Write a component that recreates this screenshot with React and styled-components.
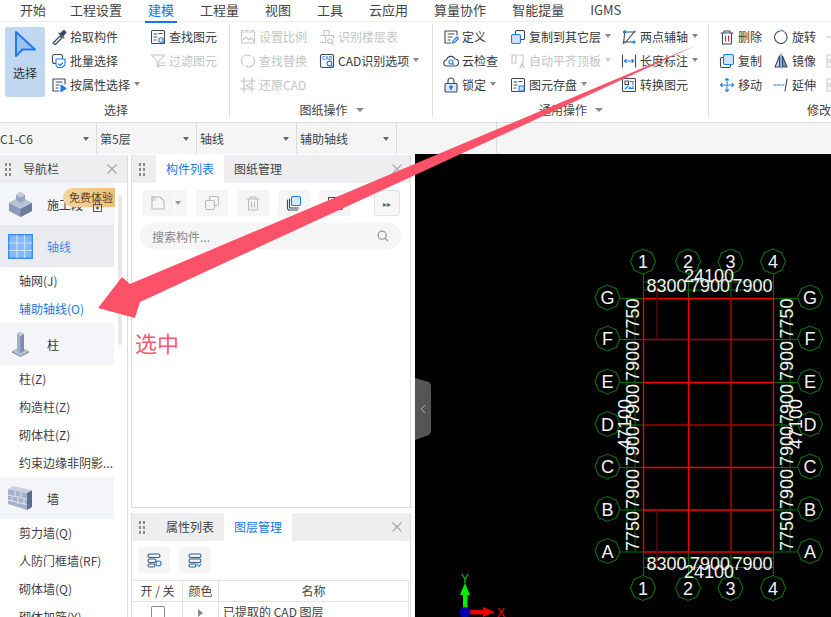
import React from 'react';
import styled, { createGlobalStyle } from 'styled-components';

const Global = createGlobalStyle`
  html, body { margin: 0; padding: 0; background: #fff; }
  * { box-sizing: border-box; }
  body { font-family: "Noto Sans CJK SC", "Noto Sans", sans-serif; font-size: 12px; color: #333; }
`;

const Page = styled.div`
  position: relative; width: 831px; height: 617px; overflow: hidden; display: flex; flex-direction: column; background: #fff;
`;
const Menu = styled.div`
  height: 22px; flex: none; display: flex; gap: 26px; padding-left: 20px; border-bottom: 1px solid #efefef; background: #fff;
  & > :first-child { margin-right: -2px; }
`;
const MenuItem = styled.div`
  position: relative; font-size: 13px; line-height: 20px; white-space: nowrap;
  color: ${p => (p.$active ? '#1677e8' : '#444')};
  ${p => p.$active && `&::after { content: ''; position: absolute; left: -3px; right: -3px; bottom: -2px; height: 2px; background: #1677e8; }`}
`;
const Ribbon = styled.div`
  height: 100px; flex: none; display: flex; overflow: hidden; background: #fff;
`;
const Group = styled.div`
  flex: none; width: ${p => p.$w}px; display: flex; flex-direction: column; padding-top: 2px;
  ${p => p.$sep && `position: relative; &::after { content: ''; position: absolute; right: 0; top: 2px; height: 94px; width: 1px; background: #e2e2e2; }`}
`;
const GroupBody = styled.div`
  display: flex; height: 76px; padding-left: ${p => p.$pad}px;
`;
const GroupTitle = styled.div`
  height: 20px; line-height: 20px; display: flex; align-items: center; justify-content: center; gap: 7px; color: #444; padding-left: ${p => p.$off || 0}px; white-space: nowrap;
`;
const SelectBtn = styled.div`
  width: 40px; height: 70px; margin: 3px 6px 0 0; border-radius: 3px; background: #bfd7f0; display: flex; flex-direction: column; align-items: center; padding-top: 3px; gap: 6px;
`;
const Col = styled.div`
  flex: none; width: ${p => p.$w}px; display: flex; flex-direction: column;
`;
const Item = styled.div`
  height: 24px; display: flex; align-items: center; gap: 3px; white-space: nowrap; color: ${p => (p.$off ? '#c4c4c4' : '#3a3a3a')};
  svg { flex: none; margin-top: 1px; }
`;
const Caret = styled.span`
  display: inline-block; margin-left: 1px; width: 0; height: 0; border-left: 3px solid transparent; border-right: 3px solid transparent;
  border-top: 4px solid ${p => p.$c || '#888'};
`;
const TitleCaret = styled(Caret)`
  border-left-width: 4px; border-right-width: 4px; border-top-width: 4px;
`;
const Bar = styled.div`
  height: 32px; flex: none; display: flex; background: #f5f5f5; border-top: 1px solid #dcdcdc;
`;
const BarCell = styled.div`
  width: ${p => p.$w}px; flex: none; border-right: 1px solid #dcdcdc; display: flex; align-items: center; justify-content: space-between; padding: 0 7px 0 ${p => p.$pad}px; color: #444;
`;
const Body = styled.div`
  flex: 1; min-height: 0; display: flex;
`;
const Nav = styled.div`
  position: relative; width: 128px; flex: none; margin-top: 1px; border-right: 1px solid #ddd; overflow: hidden;
`;
const PanelHead = styled.div`
  height: 28px; display: flex; align-items: stretch; background: #eeeef0; position: relative; color: #444;
`;
const Grip = styled.div`
  width: 7px; height: 14px; margin: 7px 0 0 ${p => p.$l}px; flex: none;
  background-image: radial-gradient(circle, #8a8a8a 1.2px, transparent 1.4px);
  background-size: 4px 5px;
`;
const NavTitle = styled.div`
  margin-left: 12px; line-height: 28px;
`;
const CloseMark = styled.div`
  position: absolute; right: ${p => p.$r}px; top: 7px; width: 14px; height: 14px; color: #aaa;
  svg { display: block; }
`;
const Cat = styled.div`
  width: 114px; height: 42px; display: flex; align-items: center; padding-left: 8px; gap: 14px; background: ${p => (p.$active ? '#e9ebf0' : '#f4f5f8')}; color: ${p => (p.$active ? '#4a86e8' : '#3a3a3a')};
`;
const Sub = styled.div`
  height: 28px; line-height: 28px; padding-left: 19px; white-space: nowrap; width: 114px; color: ${p => (p.$active ? '#1677e8' : '#3f3f3f')};
`;
const Badge = styled.div`
  position: absolute; left: 63px; top: 33px; width: 52px; height: 19px; border-radius: 10px 0 0 10px; background: linear-gradient(90deg, #f3d5a0, #ecc07a); color: #5e3e16; font-size: 11px; line-height: 19px; padding-left: 6px; white-space: nowrap;
`;
const Lock = styled.div`
  position: absolute; left: 92px; top: 43px; width: 12px; height: 12px;
`;
const Scroll = styled.div`
  position: absolute; left: 118px; top: 40px; width: 4px; height: 150px; border-radius: 2px; background: #e8e8e8;
`;
const Side = styled.div`
  width: 280px; flex: none; margin: 1px 4px 0 3px; display: flex; flex-direction: column; gap: 5px;
`;
const Panel = styled.div`
  border: 1px solid #dcdcdc; border-top: 0; ${p => (p.$h ? `height: ${p.$h}px; flex: none; border-bottom: 0;` : 'flex: 1; min-height: 0;')} overflow: hidden; background: #fff;
`;
const Tabs = styled.div`
  display: flex; margin-left: 11px;
`;
const Tab = styled.div`
  width: 68px; text-align: center; line-height: 28px; background: ${p => (p.$active ? '#fff' : 'transparent')}; color: ${p => (p.$active ? '#1677e8' : '#444')};
`;
const Tools = styled.div`
  display: flex; padding: ${p => p.$pad}; gap: 9px;
`;
const ToolBtn = styled.div`
  width: 32px; height: 26px; border-radius: 3px; background: #f5f5f5; display: flex; align-items: center; justify-content: center;
`;
const SplitBtn = styled(ToolBtn)`
  width: 45px; justify-content: flex-start; padding-left: 8px; gap: 8px; position: relative;
  &::after { content: ''; position: absolute; left: 32px; top: 0; bottom: 0; width: 1px; background: #fff; }
`;
const MoreBtn = styled(ToolBtn)`
  width: 26px; background: #f7f7f7; border: 1px solid #e2e2e2; margin-left: 14px; color: #666; font-size: 8px;
`;
const Search = styled.div`
  height: 26px; margin: 7px 9px 0 8px; border-radius: 13px; background: #f5f5f5; display: flex; align-items: center; justify-content: space-between; padding: 0 12px; color: #888;
`;
const LayerTable = styled.div`
  margin: 7px 1px 0 1px; display: grid; grid-template-columns: 50px 36px 1fr; border-top: 1px solid #e2e2e2;
`;
const Th = styled.div`
  height: 21px; line-height: 20px; text-align: center; border-right: 1px solid #e2e2e2; border-bottom: 1px solid #e2e2e2; color: #444; white-space: nowrap;
`;
const Td = styled.div`
  height: 21px; border-right: 1px solid #e2e2e2; display: flex; align-items: center; padding-bottom: 2px; justify-content: ${p => (p.$left ? 'flex-start' : 'center')}; padding-left: ${p => (p.$left ? '4px' : '0')}; white-space: nowrap; color: #444;
`;
const Check = styled.div`
  width: 14px; height: 14px; margin-top: 2px; border: 1px solid #888; border-radius: 2px;
`;
const Arrowhead = styled.span`
  width: 0; height: 0; margin-top: 2px; border-top: 4px solid transparent; border-bottom: 4px solid transparent; border-left: 5px solid #888;
`;
const Canvas = styled.div`
  flex: 1; position: relative; background: #000; overflow: hidden;
`;
const Drawing = styled.svg`
  position: absolute; left: 0; top: 0; display: block;
`;
const Overlay = styled.svg`
  position: absolute; left: 0; top: 0; pointer-events: none;
`;
const Note = styled.div`
  position: absolute; left: 135px; top: 326px; font-size: 22px; line-height: 32px; color: #fb5a70;
`;

const D = '#3c4a5c', B = '#1e7ce8', G = '#c6c6c6';
const S = ({ children, c = D, size = 16 }) => (
  <svg width={size} height={size} viewBox="0 0 16 16" fill="none" stroke={c} strokeWidth="1.1" strokeLinejoin="round" strokeLinecap="round">{children}</svg>
);
const icons = {
  pick: <S><path d="M2 14l7-7 2 2-7 7z" fill="#dbe9fa" stroke={D} /><path d="M9 5l4-3.500 2 2-3.500 4z" fill={D} /><path d="M8 4l5 5" /></S>,
  batch: <S><rect x="1.5" y="1.5" width="10" height="9" rx="2" /><path d="M5 6h9v6l-3 2.5H6.5L5 12z" stroke={B} fill="#fff" /><path d="M7.5 11l1.5 1.5 2.5-2.5" stroke={B} /></S>,
  attr: <S><path d="M14 7V2H2v12h6" /><path d="M5 5h6M5 8h3M5 11h2" /><path d="M10 8l5 3.5-5 3z" fill={B} stroke={B} /></S>,
  find: <S><rect x="1.5" y="1.5" width="13" height="13" rx="1" /><path d="M4 5h3M4 8h3M4 11h2M9 4.5h3" /><circle cx="11" cy="11" r="2.2" stroke={B} /><path d="M13 13l1.5 1.5" stroke={B} /></S>,
  filter: <S c={G}><path d="M1.5 2h13L9 8v6l-2-2V8z" /><path d="M11 10h4M11 12.5h4" /></S>,
  scale: <S c={G}><rect x="1.5" y="3" width="13" height="11" /><path d="M3 11l3-3 3 3 2-2 3 3M1 1.5h2M6 1.5h2M11 1.5h3" /></S>,
  floor: <S c={G}><path d="M5 1.5h5v5H5zM1.5 6.5h5v7h-5M10 6.5h4.5v3" /><circle cx="11" cy="12" r="2.3" /><path d="M13 14l1.5 1.5" /></S>,
  replace: <S c={G}><path d="M3 12A6 6 0 0 1 8 2l2 1M13 4a6 6 0 0 1-5 10l-2-1" /></S>,
  cadopt: <S><rect x="1.5" y="1.5" width="13" height="13" rx="1.5" /><text x="8" y="6.5" fontSize="4.6" textAnchor="middle" fill={B} stroke="none" fontFamily="Liberation Sans" fontWeight="700">CAD</text><circle cx="10.5" cy="10.5" r="2.4" stroke={B} /><path d="M12.3 12.3L14 14" stroke={B} /></S>,
  restore: <S c={G}><path d="M4 1v14M12 1v14M1 4h14M1 12h14" /><path d="M11 6L6 8.5l5 2.5" /></S>,
  define: <S><path d="M14 6V2H2v12h6" /><path d="M5 5h6M5 8h4M5 11h2" /><path d="M9.5 14l.5-2 4-4 1.5 1.5-4 4z" stroke={B} /></S>,
  cloud: <S><path d="M4 13a3 3 0 0 1-.5-6A4.5 4.5 0 0 1 12 6a3.5 3.5 0 0 1 0 7z" /><circle cx="8" cy="9" r="2" stroke={B} /><path d="M9.5 10.5l1 1" stroke={B} /></S>,
  lock: <S><rect x="2" y="6.5" width="12" height="8.5" rx="1" fill="#dbe9fa" /><path d="M5 6.5V4a3 3 0 0 1 6 0v2.5" /><circle cx="8" cy="10" r="1.3" fill={B} stroke={B} /><path d="M8 10v3" stroke={B} /></S>,
  copyto: <S><rect x="5.5" y="1.5" width="9" height="9" rx="1" /><rect x="1.5" y="5.5" width="9" height="9" rx="1.5" fill="#cfe2f8" stroke={B} /></S>,
  align: <S c={G}><path d="M2 2h4v8H2zM8 2h5v8" /><path d="M10 15l2-5 2 5M10.8 13h2.4" /></S>,
  save: <S><rect x="1.5" y="1.5" width="13" height="13" rx="1" /><path d="M4 5h3M4 8h3M4 11h2M9 4.5h3" /><rect x="9" y="9" width="5" height="5" fill="#cfe2f8" stroke={B} /></S>,
  twopt: <S><path d="M3 3h11M2 13h11M4 1.5L2.5 14.5M14 2L4 14" /><circle cx="3.5" cy="3" r="1" fill={B} stroke={B} /><circle cx="13" cy="13" r="1" fill={B} stroke={B} /></S>,
  dim: <S><path d="M1.5 2v12M14.5 2v12" /><path d="M3.500 8h9M5 6.500L3.500 8 5 9.500M11 6.500L12.500 8 11 9.500" stroke={B} /></S>,
  convert: <S><rect x="1.500" y="1.500" width="13" height="13" rx="1" /><rect x="4" y="4" width="3.500" height="3.500" /><path d="M9 4.500h3v3M12 9v2.500H8l1.500-1.500" stroke={B} /><path d="M4 12l3-3" stroke={B} /></S>,
  del: <S><path d="M2 4h12M5 4V2h6v2M3.500 4v11h9V4" /><path d="M6.500 7v5M9.500 7v5" stroke="#d22" /></S>,
  rotate: <S><path d="M12 3.500A6.300 6.300 0 1 1 7 2" /><path d="M8 1l3 1.500" stroke={B} /></S>,
  copy: <S><rect x="1.500" y="4.500" width="10" height="10" rx="1.500" /><rect x="4.500" y="1.500" width="10" height="10" rx="1.500" fill="#cfe2f8" stroke={B} /></S>,
  mirror: <S><path d="M6.500 3v11H2z" fill="#c9d6e6" /><path d="M9.500 3v11H14z" fill="#7f93ad" /><path d="M8 1v14" stroke={B} /></S>,
  move: <S c={B}><path d="M8 1.500v13M1.500 8h13M6.500 3L8 1.500 9.500 3M6.500 13L8 14.500 9.500 13M3 6.500L1.500 8 3 9.500M13 6.500L14.500 8 13 9.500" strokeDasharray="2 1" /></S>,
  extend: <S><path d="M1 8h2.500M5 8h2.500M9 8h2" stroke={B} /><path d="M14 2l-2 12" /></S>,
  ghost: <S c={G}><rect x="2" y="2" width="5" height="5" /><rect x="2" y="9" width="12" height="5" /></S>,
};
const I = ({ n }) => icons[n];

const RItem = ({ icon, text, off, caret }) => (
  <Item $off={off}><I n={icon} />{text}{caret && <Caret $c={off ? '#ccc' : '#888'} />}</Item>
);

const Cube = () => (
  <svg width="25" height="26" viewBox="0 0 25 26">
    <path d="M1 12l11.500-6L24 12v8l-11.500 6L1 20z" fill="#8d99b5" />
    <path d="M1 12l11.500 6L24 12l-11.500-6z" fill="#b9c3d6" />
    <path d="M12.500 18v8L24 20v-8z" fill="#6e7b9c" />
    <path d="M8 4l4.500-3L17 4v5l-4.500 3L8 9z" fill="#98a5c0" />
    <path d="M8 4l4.500 2.500L17 4l-4.500-3z" fill="#c3cbdc" />
  </svg>
);
const Grid = () => (
  <svg width="25" height="25" viewBox="0 0 25 25">
    <rect width="25" height="25" fill="#3d8cf5" />
    <rect x="1.500" y="1.500" width="22" height="22" fill="#86b8f7" />
    <path d="M9 1v23M16.500 1v23M1 9h23M1 16.500h23" stroke="#c8dffb" strokeWidth="1.200" />
  </svg>
);
const Pillar = () => (
  <svg width="25" height="26" viewBox="0 0 25 26">
    <path d="M4 20l8.500-4 8.500 4-8.500 5z" fill="#b6bfd1" />
    <path d="M4 20v1.500l8.500 4.500 8.500-4.500V20l-8.500 5z" fill="#76829f" />
    <path d="M9 3l3.500-2L16 3v17l-3.500 2L9 20z" fill="#7d8aa9" />
    <path d="M9 3l3.500 2V22L9 20z" fill="#a3aec5" />
    <path d="M9 3l3.500-2L16 3l-3.500 2z" fill="#c7cfdf" />
  </svg>
);
const Wall = () => (
  <svg width="25" height="25" viewBox="0 0 25 25">
    <path d="M0 3l19 4v17L0 18z" fill="#a5b1c9" />
    <path d="M19 7l5-3v17l-5 3z" fill="#5e6e92" />
    <path d="M0 3l5-3 19 4-5 3z" fill="#c9d1e0" />
    <path d="M0 9l19 4M0 14l19 4.500M7 5v6M13 6v6M4 11v5M10 12v6M16 13v6" stroke="#dfe4ee" strokeWidth="1" fill="none" />
  </svg>
);
const X = ({ size = 14, c = '#aaa' }) => (
  <svg width={size} height={size} viewBox="0 0 14 14" stroke={c} strokeWidth="1.300" fill="none"><path d="M2.500 2.500l9 9M11.500 2.500l-9 9" /></svg>
);

const VX = [643.5, 688.5, 731, 773.5];
const HY = [298.5, 339.5, 382.5, 425, 467.5, 510, 552];
const NUM = ['1', '2', '3', '4'];
const LET = ['G', 'F', 'E', 'D', 'C', 'B', 'A'];
const octagon = (cx, cy, r) => Array.from({ length: 8 }, (_, i) => {
  const a = (i * Math.PI) / 4;
  return `${(cx + r * Math.cos(a)).toFixed(1)},${(cy + r * Math.sin(a)).toFixed(1)}`;
}).join(' ');
const GREEN = '#0b6e0b';
const TXT = { fontFamily: '"Liberation Sans", sans-serif', fontSize: 18, fill: '#f2f2f2' };

const Bubble = ({ x, y, t }) => (
  <g>
    <polygon points={octagon(x, y, 12.500)} fill="none" stroke={GREEN} strokeWidth="1.100" />
    <text x={x} y={y + 6.500} textAnchor="middle" {...TXT}>{t}</text>
  </g>
);
const RotText = ({ x, y, t }) => (
  <text transform={`translate(${x} ${y}) rotate(-90)`} textAnchor="middle" {...TXT}>{t}</text>
);
const DIMS = [[318.5, '7750'], [361, '7900'], [404, '7900'], [446, '7900'], [489, '7900'], [531, '7750']];

const Cad = () => (
  <Drawing width="416" height="463" viewBox="415 154 416 463">
    <g stroke={GREEN} strokeWidth="1" fill="none">
      {VX.map(x => <path key={x} d={`M${x} 274V298M${x} 552V576`} />)}
      {HY.map(y => <path key={y} d={`M620 ${y}H643M774 ${y}H797`} />)}
      <path d="M643 282H774M643 290H774M643 558H774M643 567.500H774" />
      <path d="M627 298V552M635 298V552M782 298V552M790 298V552" />
    </g>
    <g stroke="#ff0000" strokeWidth="1.300" fill="none">
      {HY.filter((_, i) => ![1, 3].includes(i)).map(y => <path key={y} d={`M643.500 ${y}H773.500`} />)}
      <path d="M643.500 298V552M688.500 298V552M773.500 298V552" />
    </g>
    <g stroke="#a80000" strokeWidth="1.600" fill="none">
      <path d="M643.500 339.500H773.500M643.500 425H773.500M731 298V552M643.500 552H773.500" />
    </g>
    <path d="M657 283V339M657 510V567" stroke="#5c0000" strokeWidth="1.600" fill="none" />
    {VX.map((x, i) => <Bubble key={x} x={x - 0.500} y={261.500} t={NUM[i]} />)}
    {VX.map((x, i) => <Bubble key={x} x={x - 0.500} y={588} t={NUM[i]} />)}
    {HY.map((y, i) => <Bubble key={y} x={607.500} y={y - 1} t={LET[i]} />)}
    {HY.map((y, i) => <Bubble key={y} x={810} y={y - 1} t={LET[i]} />)}
    <text x="709" y="282" textAnchor="middle" {...TXT}>24100</text>
    <text x="666.500" y="292" textAnchor="middle" {...TXT}>8300</text>
    <text x="710" y="292" textAnchor="middle" {...TXT}>7900</text>
    <text x="752.500" y="292" textAnchor="middle" {...TXT}>7900</text>
    <text x="666.500" y="570" textAnchor="middle" {...TXT}>8300</text>
    <text x="710" y="570" textAnchor="middle" {...TXT}>7900</text>
    <text x="752.500" y="570" textAnchor="middle" {...TXT}>7900</text>
    <text x="709" y="578" textAnchor="middle" {...TXT}>24100</text>
    {DIMS.map(([y, t], i) => <RotText key={i} x={639} y={y} t={t} />)}
    {DIMS.map(([y, t], i) => <RotText key={i} x={793} y={y} t={t} />)}
    <RotText x={631} y={424} t="47100" />
    <RotText x={802} y={424} t="47100" />
    <polygon points="415,378 429,382 431,385 431,432 429,435 415,440" fill="#555" />
    <path d="M425 405l-4 4 4 4" stroke="#aaa" strokeWidth="1" fill="none" />
    <rect x="463" y="594" width="4.500" height="16" fill="#00ee00" />
    <polygon points="465,583 470,595 460,595" fill="#00ee00" />
    <rect x="468" y="610" width="16" height="4.500" fill="#ee0000" />
    <polygon points="495,612 483,607 483,617" fill="#ee0000" />
    <circle cx="465" cy="612.500" r="5.500" fill="#0000b0" />
    <text x="465" y="583" textAnchor="middle" fontSize="12" fontFamily="Liberation Sans" fill="#00cc00">Y</text>
    <text x="501" y="617" textAnchor="middle" fontSize="12" fontFamily="Liberation Sans" fill="#ee0000">X</text>
  </Drawing>
);

export default function App() {
  return (
    <Page>
      <Global />
      <Menu>
        {['开始', '工程设置', '建模', '工程量', '视图', '工具', '云应用', '算量协作', '智能提量', 'IGMS'].map(m => (
          <MenuItem key={m} $active={m === '建模'}>{m}</MenuItem>
        ))}
      </Menu>
      <Ribbon>
        <Group $w={230} $sep>
          <GroupBody $pad={5}>
            <SelectBtn>
              <svg width="24" height="28" viewBox="0 0 24 28"><path d="M3 2l19 17.500H9.500L3 26z" fill="#9cc2ee" stroke="#1e7ce8" strokeWidth="2" strokeLinejoin="round" /></svg>
              选择
            </SelectBtn>
            <Col $w={99}>
              <RItem icon="pick" text="拾取构件" />
              <RItem icon="batch" text="批量选择" />
              <RItem icon="attr" text="按属性选择" caret />
            </Col>
            <Col $w={79}>
              <RItem icon="find" text="查找图元" />
              <RItem icon="filter" text="过滤图元" off />
            </Col>
          </GroupBody>
          <GroupTitle $off={2}>选择</GroupTitle>
        </Group>
        <Group $w={203} $sep>
          <GroupBody $pad={10}>
            <Col $w={79}>
              <RItem icon="scale" text="设置比例" off />
              <RItem icon="replace" text="查找替换" off />
              <RItem icon="restore" text="还原CAD" off />
            </Col>
            <Col $w={110}>
              <RItem icon="floor" text="识别楼层表" off />
              <RItem icon="cadopt" text="CAD识别选项" caret />
            </Col>
          </GroupBody>
          <GroupTitle>图纸操作<TitleCaret /></GroupTitle>
        </Group>
        <Group $w={276} $sep>
          <GroupBody $pad={10}>
            <Col $w={67}>
              <RItem icon="define" text="定义" />
              <RItem icon="cloud" text="云检查" />
              <RItem icon="lock" text="锁定" caret />
            </Col>
            <Col $w={111}>
              <RItem icon="copyto" text="复制到其它层" caret />
              <RItem icon="align" text="自动平齐顶板" off caret />
              <RItem icon="save" text="图元存盘" caret />
            </Col>
            <Col $w={85}>
              <RItem icon="twopt" text="两点辅轴" caret />
              <RItem icon="dim" text="长度标注" caret />
              <RItem icon="convert" text="转换图元" />
            </Col>
          </GroupBody>
          <GroupTitle>通用操作<TitleCaret /></GroupTitle>
        </Group>
        <Group $w={122}>
          <GroupBody $pad={10}>
            <Col $w={54}>
              <RItem icon="del" text="删除" />
              <RItem icon="copy" text="复制" />
              <RItem icon="move" text="移动" />
            </Col>
            <Col $w={52}>
              <RItem icon="rotate" text="旋转" />
              <RItem icon="mirror" text="镜像" />
              <RItem icon="extend" text="延伸" />
            </Col>
            <Col $w={16}>
              <Item $off><svg width="16" height="16" viewBox="0 0 16 16" stroke="#c6c6c6" fill="none"><path d="M1 8h14" /></svg></Item>
              <Item $off><I n="ghost" /></Item>
              <Item $off><I n="ghost" /></Item>
            </Col>
          </GroupBody>
          <GroupTitle $off={98}>修改</GroupTitle>
        </Group>
      </Ribbon>
      <Bar>
        <BarCell $w={97} $pad={0}>C1-C6<Caret $c="#666" /></BarCell>
        <BarCell $w={100} $pad={3}>第5层<Caret $c="#666" /></BarCell>
        <BarCell $w={100} $pad={3}>轴线<Caret $c="#666" /></BarCell>
        <BarCell $w={100} $pad={3}>辅助轴线<Caret $c="#666" /></BarCell>
        <BarCell $w={100} $pad={3} />
      </Bar>
      <Body>
        <Nav>
          <PanelHead>
            <Grip $l={4} />
            <NavTitle>导航栏</NavTitle>
            <CloseMark $r={8}><X /></CloseMark>
          </PanelHead>
          <Cat><Cube />施工段</Cat>
          <Cat $active><Grid />轴线</Cat>
          <Sub>轴网(J)</Sub>
          <Sub $active>辅助轴线(O)</Sub>
          <Cat><Pillar />柱</Cat>
          <Sub>柱(Z)</Sub>
          <Sub>构造柱(Z)</Sub>
          <Sub>砌体柱(Z)</Sub>
          <Sub>约束边缘非阴影...</Sub>
          <Cat><Wall />墙</Cat>
          <Sub>剪力墙(Q)</Sub>
          <Sub>人防门框墙(RF)</Sub>
          <Sub>砌体墙(Q)</Sub>
          <Sub>砌体加筋(Y)</Sub>
          <Badge>免费体验</Badge>
          <Lock>
            <svg width="12" height="12" viewBox="0 0 12 12" fill="none" stroke="#555"><rect x="1.500" y="4.500" width="8" height="7" /><path d="M3.500 4.500V2.500a2 2 0 0 1 4 0v2" /><circle cx="5.500" cy="8" r="1" fill="#555" /></svg>
          </Lock>
          <Scroll />
        </Nav>
        <Side>
          <Panel>
            <PanelHead>
              <Grip $l={6} />
              <Tabs>
                <Tab $active>构件列表</Tab>
                <Tab>图纸管理</Tab>
              </Tabs>
              <CloseMark $r={6}><X /></CloseMark>
            </PanelHead>
            <Tools $pad="7px 9px 0 10px">
              <SplitBtn>
                <S c="#bbb" size={16}><path d="M2 2h8l4 4v8H2z" /><path d="M2 2h3v3H2z" strokeDasharray="1 1" /></S>
                <Caret $c="#999" />
              </SplitBtn>
              <ToolBtn><S c="#bbb"><rect x="5.500" y="1.500" width="9" height="9" rx="1.500" /><rect x="1.500" y="5.500" width="9" height="9" rx="1.500" fill="#f5f5f5" /></S></ToolBtn>
              <ToolBtn><S c="#bbb"><path d="M2 4h12M5 4V2h6v2M3.500 4v11h9V4M6.500 7v5M9.500 7v5" /></S></ToolBtn>
              <ToolBtn><S><path d="M1.500 5v8a2 2 0 0 0 2 2h8" /><path d="M3.500 4v8a1.500 1.500 0 0 0 1 1h8" /><rect x="5.500" y="1.500" width="9" height="9" rx="1.500" fill="#d8e9fb" stroke={B} /></S></ToolBtn>
              <ToolBtn><S><rect x="1.500" y="2.500" width="13" height="10" /><path d="M9 14h6" stroke={B} strokeWidth="2" /></S></ToolBtn>
              <MoreBtn>▸▸</MoreBtn>
            </Tools>
            <Search>
              搜索构件...
              <svg width="12" height="12" viewBox="0 0 12 12" fill="none" stroke="#999" strokeWidth="1.300"><circle cx="5.200" cy="5.200" r="4" /><path d="M8.200 8.200L11 11" /></svg>
            </Search>
          </Panel>
          <Panel $h={104}>
            <PanelHead>
              <Grip $l={6} />
              <Tabs>
                <Tab>属性列表</Tab>
                <Tab $active>图层管理</Tab>
              </Tabs>
              <CloseMark $r={6}><X /></CloseMark>
            </PanelHead>
            <Tools $pad="6px 0 0 6px">
              <ToolBtn><S c="#3a5a80"><rect x="2" y="2" width="12" height="3.500" rx="1.700" /><rect x="2" y="7" width="8" height="3.500" rx="1.700" /><rect x="2" y="12" width="7" height="3" rx="1.500" /><circle cx="12.500" cy="11.500" r="2.500" stroke={B} /></S></ToolBtn>
              <ToolBtn><S c="#3a5a80"><rect x="2" y="2" width="12" height="3.500" rx="1.700" /><rect x="2" y="7" width="12" height="3.500" rx="1.700" /><rect x="2" y="12" width="7" height="3" rx="1.500" /><path d="M10 12l2 2.500 2-2.500" stroke={B} /></S></ToolBtn>
            </Tools>
            <LayerTable>
              <Th>开 / 关</Th>
              <Th>颜色</Th>
              <Th>名称</Th>
              <Td><Check /></Td>
              <Td><Arrowhead /></Td>
              <Td $left>已提取的 CAD 图层</Td>
            </LayerTable>
          </Panel>
        </Side>
        <Canvas><Cad /></Canvas>
      </Body>
      <Overlay width="831" height="617" viewBox="0 0 831 617">
        <polygon points="697,45 220,265 140,302 135,318 98,308 122,277 130,284 175,265" fill="#fb5269" />
      </Overlay>
      <Note>选中</Note>
    </Page>
  );
}
